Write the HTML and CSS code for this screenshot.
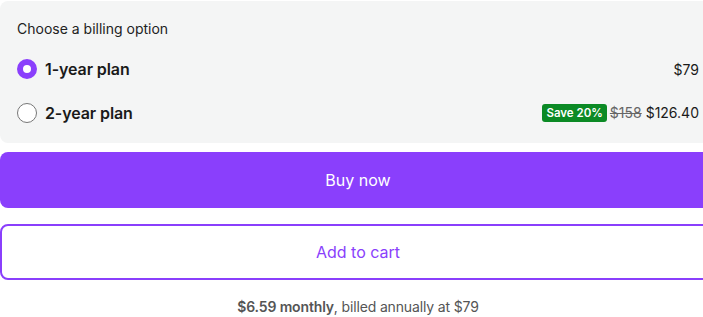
FILE: index.html
```html
<!DOCTYPE html>
<html>
<head>
<meta charset="utf-8">
<link rel="stylesheet" href="styles.css">
</head>
<body>
<div class="wrap">
  <div class="panel">
    <div class="legend">Choose a billing option</div>
    <div class="option">
      <span class="radio checked"></span>
      <span class="plan">1-year plan</span>
      <span class="price">$79</span>
    </div>
    <div class="option">
      <span class="radio"></span>
      <span class="plan">2-year plan</span>
      <span class="price"><span class="badge">Save 20%</span><s class="old">$158</s> $126.40</span>
    </div>
  </div>
  <button class="btn primary">Buy now</button>
  <button class="btn secondary">Add to cart</button>
  <p class="note"><b>$6.59 monthly</b>, billed annually at $79</p>
</div>
</body>
</html>
```
FILE: styles.css
```css
html, body { margin: 0; padding: 0; background: #fff; }
body { font-family: Inter, "Noto Sans", sans-serif; color: #1a1a1a; }
.wrap { width: 716px; padding-top: 1px; display: flex; flex-direction: column; }
.panel { background: #f4f5f5; border-radius: 8px; padding: 18px 17px 10px; height: 142px; box-sizing: border-box; }
.legend { font-size: 14px; line-height: 20px; color: #222; margin-bottom: 8px; }
.option { display: flex; align-items: center; height: 44px; }
.radio { width: 18px; height: 18px; border: 1px solid #777; border-radius: 50%; background: #fff; box-sizing: content-box; margin-right: 8px; }
.radio.checked { width: 8px; height: 8px; border: 6px solid #8a3ffc; }
.plan { font-size: 16px; font-weight: 600; flex: 1; letter-spacing: -0.1px; }
.price { font-size: 14px; white-space: nowrap; }
.badge { display: inline-block; background: #0b8a25; color: #fff; font-size: 11.5px; font-weight: 600; padding: 1px 4px; border-radius: 3px; line-height: 16px; vertical-align: 1px; margin-right: 3px; }
.old { color: #666; }
.btn { display: block; width: 716px; height: 56px; border-radius: 8px; font-family: inherit; font-size: 16px; cursor: pointer; }
.primary { margin-top: 9px; background: #8a3ffc; color: #fff; border: 0; }
.secondary { margin-top: 16px; background: #fff; color: #8a3ffc; border: 2px solid #8a3ffc; }
.note { margin: 18px 0 0; text-align: center; font-size: 14px; color: #555; letter-spacing: -0.15px; }
.note b { font-weight: 600; }
```
